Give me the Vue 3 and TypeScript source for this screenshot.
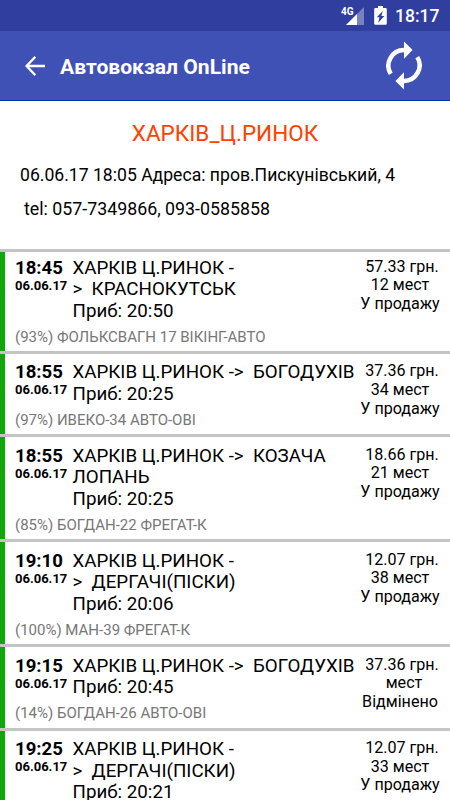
<script setup lang="ts">
interface Trip {
  time: string
  date: string
  route: string[]
  arrival: string
  bus: string
  price: string
  seats: string
  status: string
}

const trips: Trip[] = [
  { time: '18:45', date: '06.06.17', route: ['ХАРКІВ Ц.РИНОК -', '>  КРАСНОКУТСЬК'], arrival: '20:50', bus: '(93%) ФОЛЬКСВАГН 17 ВІКІНГ-АВТО', price: '57.33 грн.', seats: '12 мест', status: 'У продажу' },
  { time: '18:55', date: '06.06.17', route: ['ХАРКІВ Ц.РИНОК ->  БОГОДУХІВ'], arrival: '20:25', bus: '(97%) ИВЕКО-34 АВТО-ОВІ', price: '37.36 грн.', seats: '34 мест', status: 'У продажу' },
  { time: '18:55', date: '06.06.17', route: ['ХАРКІВ Ц.РИНОК ->  КОЗАЧА', 'ЛОПАНЬ'], arrival: '20:25', bus: '(85%) БОГДАН-22 ФРЕГАТ-К', price: '18.66 грн.', seats: '21 мест', status: 'У продажу' },
  { time: '19:10', date: '06.06.17', route: ['ХАРКІВ Ц.РИНОК -', '>  ДЕРГАЧІ(ПІСКИ)'], arrival: '20:06', bus: '(100%) МАН-39 ФРЕГАТ-К', price: '12.07 грн.', seats: '38 мест', status: 'У продажу' },
  { time: '19:15', date: '06.06.17', route: ['ХАРКІВ Ц.РИНОК ->  БОГОДУХІВ'], arrival: '20:45', bus: '(14%) БОГДАН-26 АВТО-ОВІ', price: '37.36 грн.', seats: '  мест', status: 'Відмінено' },
  { time: '19:25', date: '06.06.17', route: ['ХАРКІВ Ц.РИНОК -', '>  ДЕРГАЧІ(ПІСКИ)'], arrival: '20:21', bus: '', price: '12.07 грн.', seats: '33 мест', status: 'У продажу' },
]
</script>

<template>
  <div class="screen">
    <div class="status-bar">
      <svg class="signal" width="24" height="20" viewBox="0 0 24 20">
        <path d="M23 1V19H5Z" fill="#fff" fill-opacity=".35" />
        <path d="M16 8V19H5Z" fill="#fff" />
        <text class="network" x="0" y="8.5">4G</text>
      </svg>
      <svg class="battery" width="13" height="19" viewBox="0 0 13 19">
        <path fill="#fff" fill-rule="evenodd" d="M4 0h5v2h2.6q1.2 0 1.2 1.2v14.3q0 1.3-1.2 1.3H1.4q-1.2 0-1.2-1.3V3.2Q.2 2 1.4 2H4ZM8.8 5 2.8 11.2h2.7l-1.3 5.6L10.4 9.9H7.4Z" />
      </svg>
      <span class="clock">18:17</span>
    </div>
    <header class="app-bar">
      <svg class="back" width="20" height="20" viewBox="0 0 20 20" fill="none" stroke="#fff" stroke-width="2.3">
        <path d="M20 10H2M10.3 .9 1.5 10l8.8 9.1" />
      </svg>
      <h1 class="title">Автовокзал OnLine</h1>
      <svg class="refresh" width="36" height="49" viewBox="0 0 36 49" fill="none" stroke="#fff" stroke-width="4.5">
        <path d="M4.7 32.8A15.6 15.6 0 0 1 18 9.1" />
        <path d="M31.3 16.2A15.6 15.6 0 0 1 18 39.9" />
        <path d="M18 .4 26.6 9 18 17.7ZM18 31.3 9.4 39.9 18 48.6Z" fill="#fff" stroke="none" />
      </svg>
    </header>
    <section class="station">
      <h2 class="name">ХАРКІВ_Ц.РИНОК</h2>
      <p class="address">06.06.17 18:05 Адреса: пров.Пискунівський, 4</p>
      <p class="phone">tel: 057-7349866, 093-0585858</p>
    </section>
    <ul class="trips">
      <li v-for="(trip, i) in trips" :key="i" class="trip">
        <div class="main">
          <div class="when">
            <div class="time">{{ trip.time }}</div>
            <div class="date">{{ trip.date }}</div>
          </div>
          <div class="route">
            <div v-for="line in trip.route" :key="line">{{ line }}</div>
            <div>Приб: {{ trip.arrival }}</div>
          </div>
          <div class="offer">
            <div class="price">{{ trip.price }}</div>
            <div>{{ trip.seats }}</div>
            <div>{{ trip.status }}</div>
          </div>
        </div>
        <div class="bus">{{ trip.bus }}</div>
      </li>
    </ul>
  </div>
</template>

<style>
body {
  margin: 0;
  overflow: hidden;
}
</style>

<style scoped>
.screen {
  width: 450px;
  height: 800px;
  overflow: hidden;
  background: #fff;
  color: #000;
  font-family: Roboto, sans-serif;
}
.status-bar {
  box-sizing: border-box;
  display: flex;
  align-items: flex-start;
  justify-content: flex-end;
  height: 31px;
  padding: 6px 10.5px 0 0;
  background: #303f9f;
  color: #fff;
}
.signal {
  margin-right: 9px;
}
.network {
  font: 700 10px Roboto, sans-serif;
  fill: #fff;
}
.battery {
  margin-right: 8px;
}
.clock {
  font-size: 17.5px;
  font-weight: 500;
  line-height: 20px;
}
.app-bar {
  box-sizing: border-box;
  display: flex;
  align-items: center;
  height: 70px;
  padding: 0 28px 0 25px;
  background: #3f51b5;
  border-bottom: 1px solid #0433b4;
}
.title {
  flex: 1;
  margin: 2px 0 0 15px;
  color: #fff;
  font-size: 21.1px;
  font-weight: 700;
  line-height: 24px;
}
.refresh {
  margin-top: 0;
}
.station {
  box-sizing: border-box;
  height: 148px;
  padding-top: 18px;
}
.name {
  margin: 0;
  color: #ff4000;
  font-size: 22.5px;
  font-weight: 400;
  line-height: 28px;
  text-align: center;
}
.address,
.phone {
  margin: 0;
  font-size: 17.6px;
  line-height: 34px;
  white-space: pre;
}
.address {
  padding: 11px 0 0 20px;
}
.phone {
  padding-left: 24px;
  font-size: 17.8px;
}
.trips {
  margin: 0;
  padding: 0;
  list-style: none;
}
.trip {
  padding: 8.3px 10px 5px 15px;
  border-top: 3px solid #c4c4c4;
  background: linear-gradient(90deg, #10a808 5px, #fff 5px) padding-box;
}
.trip:first-child {
  padding-top: 5.5px;
}
.main {
  display: flex;
}
.when {
  flex: none;
  width: 57.5px;
  font-weight: 700;
  white-space: nowrap;
}
.time {
  font-size: 18.6px;
  line-height: 20px;
}
.date {
  font-size: 13px;
  line-height: 16px;
}
.route {
  flex: 1;
  min-width: 0;
  font-size: 18.75px;
  line-height: 21.8px;
  white-space: pre;
}
.offer {
  flex: none;
  width: 80px;
  height: 43px;
  font-size: 16.1px;
  line-height: 18.75px;
  text-align: center;
  white-space: pre;
}
.price {
  padding-left: 4px;
}
.bus {
  padding-top: 4.8px;
  color: #777;
  font-size: 15px;
  line-height: 18.5px;
  white-space: nowrap;
}
</style>
